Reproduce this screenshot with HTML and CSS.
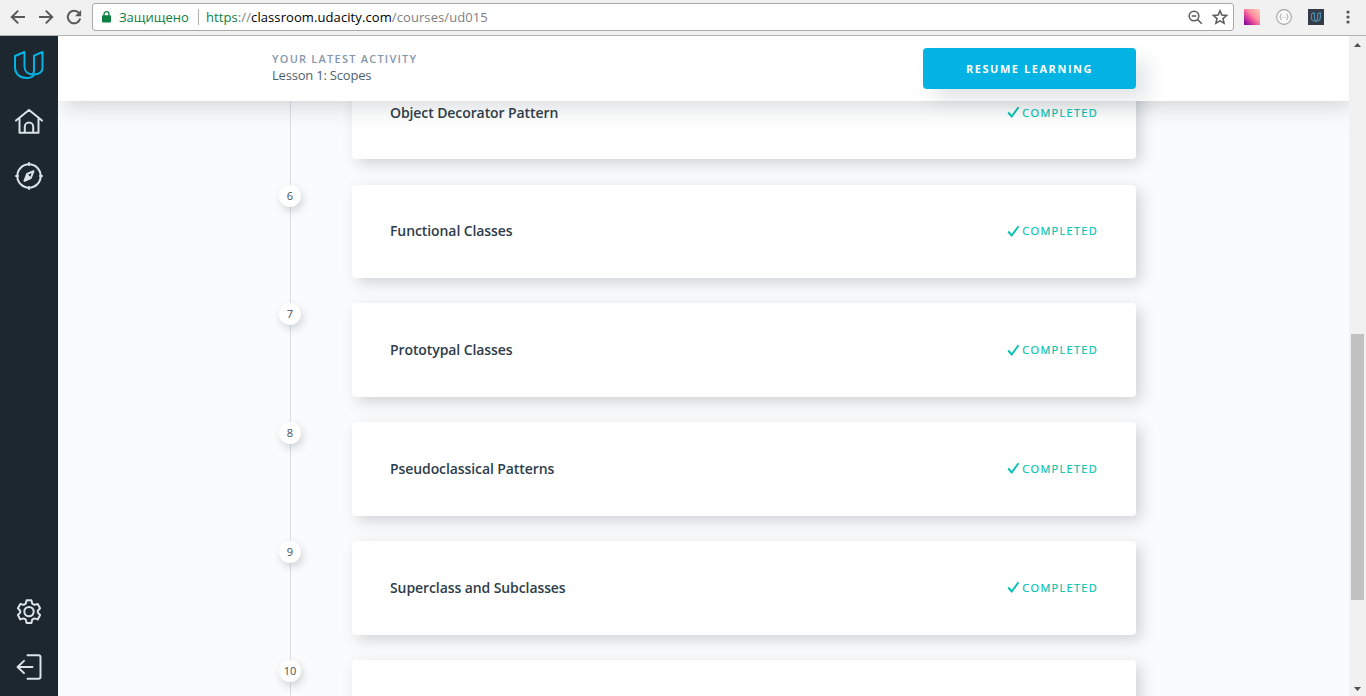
FILE: index.html
```html
<!DOCTYPE html>
<html lang="en">
<head>
<meta charset="utf-8">
<title>Classroom</title>
<link rel="stylesheet" href="styles.css">
</head>
<body>
<header class="browser">
  <div class="nav-buttons">
    <svg width="16" height="16" viewBox="0 0 16 16"><path d="M15 8H2M8.2 1.6 1.8 8l6.4 6.4"/></svg>
    <svg width="16" height="16" viewBox="0 0 16 16"><path d="M1 8h13M7.8 1.6 14.2 8l-6.4 6.4"/></svg>
    <svg width="16" height="16" viewBox="0 0 16 16"><path d="M13.4 4.6A6.3 6.3 0 1 0 14.2 9.6"/><path class="solid" d="M15.1 1v6.2H9z"/></svg>
  </div>
  <div class="address">
    <svg class="lock" width="9" height="12" viewBox="0 0 9 12"><path d="M2 5V3.2a2.5 2.5 0 0 1 5 0V5" fill="none" stroke="#0b8043" stroke-width="1.3"/><rect x="0" y="4.2" width="9" height="7.4" rx="1" fill="#0b8043"/></svg>
    <span class="secure">Защищено</span>
    <span class="divider"></span>
    <span class="url"><span class="scheme">https</span>://<span class="host">classroom.udacity.com</span>/courses/ud015</span>
    <svg class="zoom" width="15" height="15" viewBox="0 0 15 15"><circle cx="6" cy="6" r="4.8"/><path d="M3.7 6h4.6M9.5 9.5l4.3 4.3"/></svg>
    <svg class="star" width="16" height="16" viewBox="0 0 16 16"><path d="m8 1.7 1.8 4.4 4.8.4-3.6 3.1 1.1 4.7L8 11.8l-4.1 2.5L5 9.6 1.4 6.5l4.8-.4z"/></svg>
  </div>
  <div class="extensions">
    <span class="ext-pixels"></span>
    <svg width="16" height="16" viewBox="0 0 16 16"><circle cx="8" cy="8" r="7.4" fill="#fafafa" stroke="#a4a4a4" stroke-width="1.1"/><path d="M5.6 5.2q-1.2 0-1 1.4 0 1.1-.9 1.4.9.3.9 1.4-.2 1.4 1 1.4M10.4 5.2q1.2 0 1 1.4 0 1.1.9 1.4-.9.3-.9 1.4.2 1.4-1 1.4M6.6 8.4h.8M8.6 8.4h.8" fill="none" stroke="#999" stroke-width=".9"/></svg>
    <span class="ext-course"><svg width="10" height="10" viewBox="0 0 30 30"><path d="M1 6 10 2v16q0 6 7 7M28 2v16q0 10-12 10Q1 28 1 16V6M20 5l8-3M20 5v16q0 3-4 5"/></svg></span>
    <svg class="more" width="4" height="14" viewBox="0 0 4 14"><circle cx="2" cy="2" r="1.6"/><circle cx="2" cy="7" r="1.6"/><circle cx="2" cy="12" r="1.6"/></svg>
  </div>
</header>
<div class="app">
  <nav class="sidebar">
    <svg class="logo" width="30" height="29" viewBox="0 0 30 29"><path d="M1 5 10.500 1v14.500c0 5 3.500 8 9 8M28.500 1v15.500c0 4-3 6.700-8 7-2 2.500-5 3.600-8 3.500C5.500 27 1 22.500 1 16.500V5M20 4.700 28.500 1M20 4.700V19.500c0 2-.5 3-1.500 4"/></svg>
    <svg class="home" width="30" height="27" viewBox="0 0 30 27"><path d="M2 12.600 15 1.900l13 10.700M5.500 10.500v14.300h19V10.500M10.800 24.500v-5.800a4.200 4.200 0 0 1 8.400 0v5.800"/></svg>
    <svg class="compass" width="30" height="30" viewBox="0 0 30 30"><circle cx="15" cy="15" r="11.700"/><path d="M15 2v2M15 26v2M2 15h2M26 15h2"/><path d="m19.500 10.200-2.700 6.800L10.500 19.800l2.700-6.800z"/><path class="fill" d="m13.200 13 3.600 4-6.300 2.800z"/></svg>
    <svg class="gear" width="26" height="27" viewBox="0 0 26 27"><path d="M10.600 2.200h4.800l.8 3.400 2.200 1.300 3.300-1 2.400 4.400-2.300 2.400v1.900l2.300 2.400-2.400 4.400-3.300-1-2.200 1.300-.8 3.300h-4.800l-.8-3.300-2.200-1.300-3.300 1L1.900 17l2.300-2.400v-1.900l-2.300-2.400 2.400-4.400 3.300 1 2.200-1.300z"/><circle cx="13" cy="13.600" r="4.700"/></svg>
    <svg class="exit" width="27" height="26" viewBox="0 0 27 26"><path d="M11.500 1.200h11q2 0 2 2v19.600q0 2-2 2h-11M16.500 13H2M8 6.900 1.600 13 8 19.100"/></svg>
  </nav>
  <main class="main">
    <section class="latest">
      <div>
        <div class="eyebrow">YOUR LATEST ACTIVITY</div>
        <div class="lesson">Lesson 1: Scopes</div>
      </div>
      <button class="resume"><span>RESUME LEARNING</span></button>
    </section>
    <ol class="lessons">
      <li class="row"><span class="num">5</span><article class="card"><h2>Object Decorator Pattern</h2><span class="done"><svg width="13" height="12" viewBox="0 0 13 12"><path d="m1.200 6.500 3.500 4L11.500 1.200"/></svg><b>COMPLETED</b></span></article></li>
      <li class="row"><span class="num">6</span><article class="card"><h2>Functional Classes</h2><span class="done"><svg width="13" height="12" viewBox="0 0 13 12"><path d="m1.200 6.500 3.500 4L11.500 1.200"/></svg><b>COMPLETED</b></span></article></li>
      <li class="row"><span class="num">7</span><article class="card"><h2>Prototypal Classes</h2><span class="done"><svg width="13" height="12" viewBox="0 0 13 12"><path d="m1.200 6.500 3.500 4L11.500 1.200"/></svg><b>COMPLETED</b></span></article></li>
      <li class="row"><span class="num">8</span><article class="card"><h2>Pseudoclassical Patterns</h2><span class="done"><svg width="13" height="12" viewBox="0 0 13 12"><path d="m1.200 6.500 3.500 4L11.500 1.200"/></svg><b>COMPLETED</b></span></article></li>
      <li class="row"><span class="num">9</span><article class="card"><h2>Superclass and Subclasses</h2><span class="done"><svg width="13" height="12" viewBox="0 0 13 12"><path d="m1.200 6.500 3.500 4L11.500 1.200"/></svg><b>COMPLETED</b></span></article></li>
      <li class="row"><span class="num">10</span><article class="card"></article></li>
    </ol>
  </main>
  <div class="scrollbar">
    <svg width="7" height="4" viewBox="0 0 7 4"><path d="M3.500 0 7 4H0z"/></svg>
    <span class="thumb"></span>
    <svg class="down" width="7" height="4" viewBox="0 0 7 4"><path d="M0 0h7L3.500 4z"/></svg>
  </div>
</div>
</body>
</html>
```

FILE: styles.css
```css
* { box-sizing: border-box; }
body {
  margin: 0;
  height: 696px;
  overflow: hidden;
  display: flex;
  flex-direction: column;
  font-family: "Open Sans", "Noto Sans", sans-serif;
}
svg { display: block; flex: none; }

/* Browser toolbar */
.browser {
  flex: none;
  height: 36px;
  display: flex;
  align-items: flex-start;
  background: #f1f1f1;
  border-bottom: 1px solid #b2b2b2;
}
.nav-buttons { display: flex; gap: 12px; padding: 9px 0 0 10px; width: 92px; flex: none; }
.nav-buttons svg { fill: none; stroke: #5a5a5a; stroke-width: 2; }
.nav-buttons .solid { fill: #5a5a5a; stroke: none; }
.address {
  width: 1142px;
  height: 28px;
  margin-top: 3px;
  padding: 0 5px 0 9px;
  display: flex;
  align-items: center;
  background: #fff;
  border: 1px solid #a9a9a9;
  border-radius: 3px;
  font-size: 13px;
  line-height: 18px;
  white-space: nowrap;
}
.secure { color: #0b8043; margin-left: 8px; width: 79px; }
.divider { width: 1px; height: 16px; background: #b0b0b0; margin-right: 7px; }
.url { color: #808080; flex: 1; letter-spacing: .09px; }
.scheme { color: #0b8043; }
.host { color: #000; }
.zoom, .star { fill: none; stroke: #5a5a5a; stroke-width: 1.5; }
.star { margin-left: 9px; }
.extensions { display: flex; align-items: center; gap: 16px; padding: 9px 0 0 10px; }
.ext-pixels {
  width: 16px; height: 16px;
  background: linear-gradient(45deg, #8e109b 10%, #e84a9b 38%, #ff8e9f 58%, #ffd0b8 100%);
}
.ext-course { width: 16px; height: 16px; background: #343c49; display: flex; align-items: center; justify-content: center; }
.ext-course svg { fill: none; stroke: #579ac0; stroke-width: 3; }
.more { fill: #555; margin-left: 6px; }

.app { flex: 1; display: flex; min-height: 0; }

/* Left navigation */
.sidebar {
  width: 58px;
  flex: none;
  display: flex;
  flex-direction: column;
  align-items: center;
  padding: 15px 0 16px;
  background: #1d272f;
}
.sidebar svg { fill: none; stroke: #dbe2e8; stroke-width: 2; stroke-linecap: round; stroke-linejoin: round; }
.sidebar .logo { stroke: #02b3e4; }
.home { margin-top: 28px; }
.compass { margin-top: 26px; }
.sidebar .compass .fill { fill: #dbe2e8; stroke-width: 1; }
.gear { margin-top: auto; }
.exit { margin-top: 29px; }

/* Page content */
.main { flex: 1; display: flex; flex-direction: column; min-width: 0; overflow: hidden; background: #fafbfc; }
.latest {
  position: relative;
  z-index: 1;
  flex: none;
  height: 65px;
  padding: 12px 213px 12px 214px;
  display: flex;
  justify-content: space-between;
  background: #fff;
  box-shadow: 5px 5px 25px rgba(46, 61, 73, .2);
}
.eyebrow { margin-top: 3px; font-size: 11px; line-height: 16px; font-weight: 600; letter-spacing: 1.230px; color: #8598ab; }
.lesson { font-size: 13px; line-height: 16px; font-weight: 400; color: #4f5f6e; letter-spacing: -.2px; }
.resume {
  width: 213px;
  height: 41px;
  padding: 1px 0 0;
  border: 0;
  border-radius: 4px;
  background: #02b3e4;
  color: #fff;
  font: 700 11px/16px "Open Sans", sans-serif;
  letter-spacing: 1.550px;
  box-shadow: 12px 12px 20px rgba(46, 61, 73, .13);
}
.lessons {
  list-style: none;
  margin: -35.200px 0 0;
  padding: 0 213px 0 221px;
}
.row {
  display: grid;
  grid-template-columns: 22px 784px;
  column-gap: 51px;
  padding-bottom: 25.200px;
  background: linear-gradient(#dbe0e6, #dbe0e6) 11px 0 / 1px 100% no-repeat;
}
.num {
  width: 22px;
  height: 22px;
  border-radius: 50%;
  background: #fff;
  box-shadow: 2px 4px 9px rgba(46, 61, 73, .2);
  color: #434d56;
  font-size: 11px;
  line-height: 22px;
  text-align: center;
}
.card {
  height: 93.600px;
  padding: 0 38px;
  display: flex;
  align-items: center;
  justify-content: space-between;
  border-radius: 4px;
  background: #fff;
  box-shadow: 5px 5px 15px rgba(46, 61, 73, .2);
}
.card h2 { margin: 0; font-size: 14px; line-height: 20px; font-weight: 600; letter-spacing: -.09px; color: #2e3d49; }
.done { display: flex; align-items: center; color: #02c3b0; }
.done svg { fill: none; stroke: #02c3b0; stroke-width: 1.900; margin: 0 2px 1px 0; }
.done b { font-size: 11px; line-height: 16px; font-weight: 500; letter-spacing: 1.300px; -webkit-text-stroke: .2px #02c3b0; }

/* Scrollbar */
.scrollbar { width: 17px; flex: none; display: flex; flex-direction: column; align-items: center; background: #f1f1f1; padding: 7px 0 5px; }
.scrollbar svg { fill: #505050; }
.thumb { width: 13px; height: 266px; margin-top: 287px; background: #c1c1c1; }
.down { margin-top: auto; }
```
